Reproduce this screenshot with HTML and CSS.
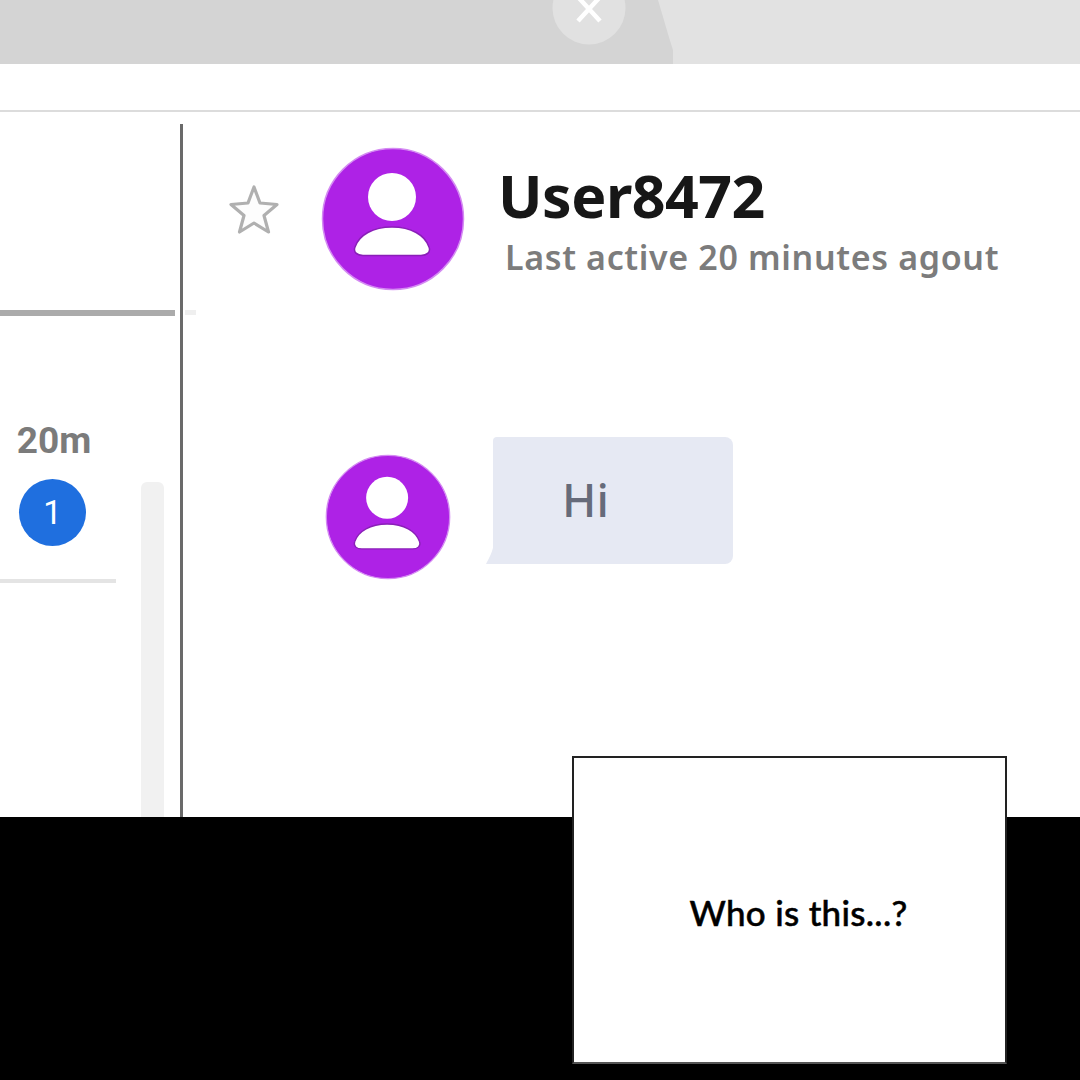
FILE: index.html
```html
<!DOCTYPE html>
<html lang="en">
<head>
<meta charset="utf-8">
<title>User8472</title>
<link rel="stylesheet" href="styles.css">
</head>
<body>
<div class="panel">
  <header class="tabstrip">
    <svg class="tab-shape" width="680" height="64" viewBox="0 0 680 64"><path d="M0 0H658C664 20 669 38 673 50V64H0Z" fill="#d4d4d4"/></svg>
    <div class="tab-close">
      <svg width="74" height="46" viewBox="0 0 74 46"><circle cx="37" cy="8" r="36.500" fill="#e1e1e1"/><path d="M26 21L48 -3M26 -3L48 21" stroke="#fff" stroke-width="4.500" fill="none"/></svg>
    </div>
  </header>
  <div class="toolbar"></div>
  <main class="app">
    <aside class="sidebar">
      <div class="side-top"></div>
      <div class="side-rule"></div>
      <div class="side-row">
        <div class="row-meta">
          <span class="time">20m</span>
          <span class="badge">1</span>
        </div>
        <div class="scrollbar"></div>
      </div>
      <div class="row-rule"></div>
    </aside>
    <section class="chat">
      <div class="chat-head">
        <svg class="star" width="52" height="52" viewBox="0 0 52 52"><path d="M26 3L32 19L49 20.500L36 31.500L40.500 48L26 39L11.500 48L16 31.500L3 20.500L20 19Z" fill="#fdfdfd" stroke="#b0b0b0" stroke-width="3.200" stroke-linejoin="round"/></svg>
        <svg class="avatar-lg" width="144" height="144" viewBox="0 0 144 144"><circle cx="72" cy="72" r="70.500" fill="#ae22e6" stroke="#d48bf2" stroke-width="1.500"/><circle cx="71" cy="50" r="24" fill="#fff"/><path d="M42 108.500C36 108.500 32 105 34 100C38 88 52 80 71 80C90 80 104 88 108 100C110 105 106 108.500 100 108.500Z" fill="#fff" stroke="#8a1fb8" stroke-width="1.500"/></svg>
        <div class="identity">
          <h1 class="name">User8472</h1>
          <p class="status">Last active 20 minutes agout</p>
        </div>
      </div>
      <div class="message">
        <svg class="avatar-sm" width="126" height="126" viewBox="0 0 144 144"><circle cx="72" cy="72" r="70.500" fill="#ae22e6" stroke="#d48bf2" stroke-width="1.500"/><circle cx="71" cy="50" r="24" fill="#fff"/><path d="M42 108.500C36 108.500 32 105 34 100C38 88 52 80 71 80C90 80 104 88 108 100C110 105 106 108.500 100 108.500Z" fill="#fff" stroke="#8a1fb8" stroke-width="1.500"/></svg>
        <div class="bubble-wrap">
          <svg class="bubble-tail" width="10" height="22" viewBox="0 0 10 22"><path d="M8 0V22H0C3 16 7 10 8 0Z" fill="#e6e9f3"/></svg>
          <div class="bubble">Hi</div>
        </div>
      </div>
    </section>
  </main>
  <footer class="band"></footer>
  <div class="caption">Who is this...?</div>
</div>
</body>
</html>
```
FILE: styles.css
```css
* { box-sizing: border-box; }
html, body { margin: 0; padding: 0; }
body { background: #fff; font-family: "Noto Sans", "Open Sans", sans-serif; }
.panel { position: relative; width: 1080px; height: 1080px; overflow: hidden; display: flex; flex-direction: column; background: #fff; }
.tabstrip { position: relative; height: 64px; background: #e2e2e2; flex: none; }
.tab-shape { display: block; }
.tab-close { position: absolute; left: 552px; top: 0; line-height: 0; }
.toolbar { height: 48px; flex: none; border-bottom: 2px solid #dcdcdc; }
.app { display: flex; flex: 1; min-height: 0; }
.sidebar { width: 183px; flex: none; border-right: 3px solid #6a6a6a; margin-top: 12px; display: flex; flex-direction: column; }
.side-top { height: 186px; flex: none; }
.side-rule { position: relative; height: 6px; width: 175px; background: #ababab; flex: none; }
.side-rule::after { content: ""; position: absolute; left: 185px; top: 0; width: 11px; height: 5px; background: #efefef; }
.side-row { flex: 1; min-height: 0; position: relative; padding: 103px 0 0 16px; }
.row-meta { display: flex; flex-direction: column; align-items: center; width: 76px; gap: 16px; }
.time { font-family: "Roboto", sans-serif; font-weight: 700; font-size: 37px; line-height: 44px; color: #7b7b7b; }
.badge { width: 67px; height: 67px; margin-right: 3px; border-radius: 50%; background: #1f6fdf; color: #fff; font-family: "Roboto", sans-serif; font-size: 33px; display: flex; align-items: center; justify-content: center; }
.scrollbar { position: absolute; left: 141px; top: 166px; bottom: 0; width: 23px; background: #f1f1f1; border-radius: 6px 6px 0 0; }
.row-rule { position: absolute; left: 0; top: 579px; width: 116px; height: 4px; background: #e4e4e4; }
.chat { flex: 1; min-width: 0; padding: 35px 0 0 45px; }
.chat-head { display: flex; align-items: flex-start; }
.star { margin-top: 37px; flex: none; }
.avatar-lg { margin-left: 41px; flex: none; }
.identity { margin-left: 33px; padding-top: 15px; }
.name { margin: 0; font-family: "Noto Sans", sans-serif; font-weight: 700; font-size: 59px; line-height: 66px; color: #171717; letter-spacing: -0.5px; }
.status { margin: 7px 0 0 7px; font-family: "Noto Sans", sans-serif; font-weight: 600; font-size: 34px; line-height: 44px; color: #7c7c7c; letter-spacing: 0.65px; }
.message { display: flex; align-items: flex-start; margin: 146px 0 0 97px; }
.avatar-sm { margin-top: 17px; flex: none; }
.bubble-wrap { position: relative; margin-left: 42px; }
.bubble-tail { position: absolute; left: -7px; bottom: 0; }
.bubble { width: 240px; height: 127px; background: #e6e9f3; border-radius: 4px 8px 8px 0; padding: 29px 0 0 69px; color: #666b7a; font-family: "Noto Sans", sans-serif; font-weight: 500; font-size: 46px; line-height: 66px; }
.band { height: 263px; flex: none; background: #000; }
.caption { position: absolute; left: 572px; top: 756px; width: 435px; height: 308px; background: #fff; border: 2px solid #222; border-bottom-color: #555; display: flex; align-items: center; justify-content: center; padding: 4px 0 0 18px; font-family: "Lato", sans-serif; font-weight: 500; font-size: 35px; color: #000; letter-spacing: 0.3px; -webkit-text-stroke: 0.5px #000; }
```
